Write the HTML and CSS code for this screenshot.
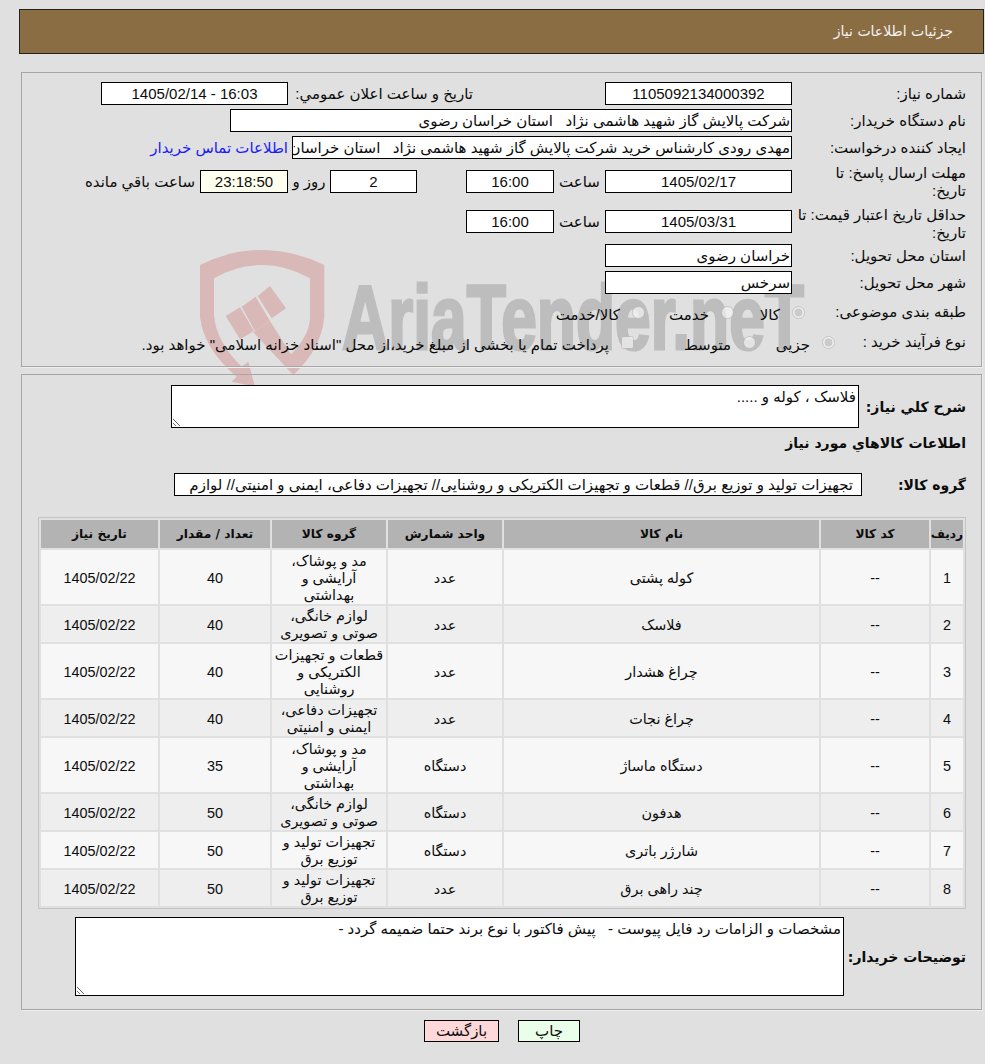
FILE: index.html
```html
<!DOCTYPE html>
<html lang="fa" dir="rtl">
<head>
<meta charset="utf-8">
<title>جزئیات اطلاعات نیاز</title>
<link rel="stylesheet" href="styles.css">
</head>
<body>
<svg class="watermark" width="985" height="420" viewBox="0 0 985 420" aria-hidden="true">
  <g class="wm-shield" transform="translate(190 245) scale(0.3333)">
    <path d="M30 60Q120 15 215 15Q310 15 403 60V215Q395 310 310 390L190 262L240 228L303 328Q360 270 360 215V100Q290 60 215 60Q140 60 72 100V210Q78 290 155 365L175 350L195 425L125 410L140 395Q40 310 30 215Z"/>
    <path d="M107 213L150 187L192 258L150 283Z"/>
    <path d="M155 185L197 155L240 228L195 258Z"/>
    <path d="M203 153L240 123L288 190L245 220Z"/>
  </g>
  <text class="wm-text" x="342" y="349" textLength="462" lengthAdjust="spacingAndGlyphs">AriaTender.neT</text>
</svg>
<header class="top-bar">جزئیات اطلاعات نیاز</header>

<section class="panel panel-info">
  <div class="row">
    <div class="label">شماره نیاز:</div>
    <div class="box box-main center">1105092134000392</div>
    <div class="pub-label">تاریخ و ساعت اعلان عمومي:</div>
    <div class="box box-main center">16:03 - 1405/02/14</div>
  </div>
  <div class="row">
    <div class="label">نام دستگاه خریدار:</div>
    <div class="box box-buyer">شرکت پالایش گاز شهید هاشمی نژاد   استان خراسان رضوی</div>
  </div>
  <div class="row row-creator">
    <div class="label">ایجاد کننده درخواست:</div>
    <div class="box box-creator">مهدی رودی کارشناس خرید شرکت پالایش گاز شهید هاشمی نژاد   استان خراسان رضوی</div>
    <a class="contact" href="#">اطلاعات تماس خریدار</a>
  </div>
  <div class="row row-date row-deadline">
    <div class="label label-wrap">مهلت ارسال پاسخ: تا تاریخ:</div>
    <div class="box box-main center">1405/02/17</div>
    <div class="word word-hour">ساعت</div>
    <div class="box box-time center">16:00</div>
    <div class="box box-days center">2</div>
    <div class="word word-days">روز و</div>
    <div class="box box-count center">23:18:50</div>
    <div class="word remain">ساعت باقي مانده</div>
  </div>
  <div class="row row-date row-validity">
    <div class="label label-wrap">حداقل تاریخ اعتبار قیمت: تا تاریخ:</div>
    <div class="box box-main center">1405/03/31</div>
    <div class="word word-hour">ساعت</div>
    <div class="box box-time center">16:00</div>
  </div>
  <div class="row">
    <div class="label">استان محل تحویل:</div>
    <div class="box box-main">خراسان رضوی</div>
  </div>
  <div class="row">
    <div class="label">شهر محل تحویل:</div>
    <div class="box box-main">سرخس</div>
  </div>
  <div class="row row-choice row-category">
    <div class="label">طبقه بندی موضوعی:</div>
    <label class="choice c-goods"><input type="radio" name="cat" checked disabled>کالا</label>
    <label class="choice c-service"><input type="radio" name="cat" disabled>خدمت</label>
    <label class="choice"><input type="radio" name="cat" disabled>کالا/خدمت</label>
  </div>
  <div class="row row-choice row-process">
    <div class="label">نوع فرآیند خرید :</div>
    <label class="choice c-minor"><input type="radio" name="proc" checked disabled>جزیی</label>
    <label class="choice c-medium"><input type="radio" name="proc" disabled>متوسط</label>
    <label class="choice"><input type="checkbox" disabled>پرداخت تمام یا بخشی از مبلغ خرید،از محل "اسناد خزانه اسلامی" خواهد بود.</label>
  </div>
</section>

<section class="panel panel-items">
  <div class="row row-desc">
    <div class="head-label">شرح کلي نیاز:</div>
    <textarea class="area area-desc" readonly>فلاسک ، کوله و .....</textarea>
  </div>
  <h2 class="section-title">اطلاعات کالاهاي مورد نیاز</h2>
  <div class="row row-group">
    <div class="head-label">گروه کالا:</div>
    <div class="box box-group"><span class="clip">تجهیزات تولید و توزیع برق// قطعات و تجهیزات الکتریکی و روشنایی// تجهیزات دفاعی، ایمنی و امنیتی// لوازم</span></div>
  </div>
  <table class="items">
    <colgroup>
      <col class="c1"><col class="c2"><col class="c3"><col class="c4"><col class="c5"><col class="c6"><col class="c7">
    </colgroup>
    <thead>
      <tr><th>ردیف</th><th>کد کالا</th><th>نام کالا</th><th>واحد شمارش</th><th>گروه کالا</th><th>تعداد / مقدار</th><th>تاریخ نیاز</th></tr>
    </thead>
    <tbody>
      <tr class="tall"><td>1</td><td>--</td><td>کوله پشتی</td><td>عدد</td><td>مد و پوشاک،<br>آرایشی و<br>بهداشتی</td><td>40</td><td>1405/02/22</td></tr>
      <tr><td>2</td><td>--</td><td>فلاسک</td><td>عدد</td><td>لوازم خانگی، صوتی و تصویری</td><td>40</td><td>1405/02/22</td></tr>
      <tr class="tall"><td>3</td><td>--</td><td>چراغ هشدار</td><td>عدد</td><td>قطعات و تجهیزات الکتریکی و روشنایی</td><td>40</td><td>1405/02/22</td></tr>
      <tr><td>4</td><td>--</td><td>چراغ نجات</td><td>عدد</td><td>تجهیزات دفاعی، ایمنی و امنیتی</td><td>40</td><td>1405/02/22</td></tr>
      <tr class="tall"><td>5</td><td>--</td><td>دستگاه ماساژ</td><td>دستگاه</td><td>مد و پوشاک،<br>آرایشی و<br>بهداشتی</td><td>35</td><td>1405/02/22</td></tr>
      <tr><td>6</td><td>--</td><td>هدفون</td><td>دستگاه</td><td>لوازم خانگی، صوتی و تصویری</td><td>50</td><td>1405/02/22</td></tr>
      <tr><td>7</td><td>--</td><td>شارژر باتری</td><td>دستگاه</td><td>تجهیزات تولید و توزیع برق</td><td>50</td><td>1405/02/22</td></tr>
      <tr><td>8</td><td>--</td><td>چند راهی برق</td><td>عدد</td><td>تجهیزات تولید و توزیع برق</td><td>50</td><td>1405/02/22</td></tr>
    </tbody>
  </table>
  <div class="row row-notes">
    <div class="head-label">توضیحات خریدار:</div>
    <textarea class="area area-notes" readonly>مشخصات و الزامات رد فایل پیوست -   پیش فاکتور با نوع برند حتما ضمیمه گردد -</textarea>
  </div>
</section>

<div class="actions">
  <button class="btn btn-print" type="button">چاپ</button>
  <button class="btn btn-back" type="button">بازگشت</button>
</div>
</body>
</html>
```

FILE: styles.css
```css
html, body { margin: 0; padding: 0; }
body {
  background: #e0e0e0;
  color: #0c0c0c;
  font-family: "Liberation Sans", "DejaVu Sans", sans-serif;
  font-size: 15px;
  line-height: 20px;
  height: 1064px;
  overflow: hidden;
  position: relative;
}
.watermark { position: absolute; left: 0; top: 0; z-index: 0; direction: ltr; }
.wm-shield { fill: #d9b8b8; }
.wm-text {
  font-family: "Liberation Sans", sans-serif;
  font-weight: 700;
  font-size: 90px;
  fill: #bdbdbd;
  stroke: #bdbdbd;
  stroke-width: 3px;
  direction: ltr;
  text-anchor: start;
}
.top-bar {
  position: relative;
  z-index: 1;
  box-sizing: border-box;
  height: 45px;
  margin: 9px 1px 0 19px;
  background: #8b6d43;
  border: 1px solid #222;
  color: #f2f2f2;
  padding: 11px 30px 0 0;
  font-family: "DejaVu Sans", sans-serif;
  font-size: 14px;
}
.panel {
  position: relative;
  z-index: 1;
  box-sizing: border-box;
  margin: 0 3px 0 21px;
  border: 1px solid #a6a6a6;
  box-shadow: 1px 1px 0 #eee;
  padding: 9px 15px 0 15px;
}
.panel-info { margin-top: 18px; height: 295px; }
.panel-items { margin-top: 7px; height: 636px; padding-top: 10px; }
.row { display: flex; align-items: center; margin-bottom: 4px; }
.label { box-sizing: border-box; width: 174px; flex: none; white-space: nowrap; }
.label-wrap { white-space: normal; line-height: 18px; }
.box {
  box-sizing: border-box;
  height: 23px;
  background: #fff;
  border: 1px solid #000;
  flex: none;
  overflow: hidden;
  white-space: pre;
  padding: 0 1px;
  line-height: 21px;
}
.center { text-align: center; }
.box-main { width: 187px; }
.box-buyer { width: 562px; }
.box-creator { width: 500px; }
.pub-label { width: 180px; margin: 0 132px 0 5px; white-space: nowrap; flex: none; }
.contact { margin-right: 4px; color: #1a1aff; text-decoration: none; white-space: nowrap; }
.row-creator { margin-bottom: 11px; }
.row-date { align-items: flex-start; }
.row-deadline { height: 36px; }
.row-deadline .label { margin-top: -6px; padding-left: 30px; }
.row-validity { height: 30px; }
.row-validity .label { margin-top: -4px; }
.word { flex: none; text-align: center; line-height: 24px; white-space: nowrap; }
.word-hour { width: 51px; }
.box-time { width: 88px; }
.box-days { width: 87px; margin-right: 49px; }
.word-days { width: 42px; }
.box-count { width: 88px; background: #fffff0; }
.remain { margin-right: 5px; }
.row-choice { height: 26px; }
.row-category { margin-top: 5px; }
.row-category .label { width: 161px; }
.row-process .label { width: 131px; }
.choice { display: flex; align-items: center; gap: 12px; white-space: nowrap; flex: none; padding-top: 6px; }
.choice input { margin: -6px 0 0; width: 13px; height: 13px; flex: none; }
.c-goods { width: 71px; }
.c-service { width: 89px; }
.c-minor { width: 79px; }
.c-medium { width: 122px; }
.head-label { width: 107px; flex: none; font-family: "DejaVu Sans", sans-serif; font-weight: 700; font-size: 14px; white-space: nowrap; }
.section-title { margin: 0; font-family: "DejaVu Sans", sans-serif; font-size: 14px; font-weight: 700; line-height: 20px; }
.area {
  box-sizing: border-box;
  background: #fff;
  border: 1px solid #000;
  border-radius: 0;
  margin: 0;
  padding: 1px 2px;
  font: inherit;
  color: inherit;
  flex: none;
  outline: none;
}
.row-desc { margin-bottom: 5px; }
.area-desc { width: 688px; height: 43px; }
.row-group { margin: 20px 0 21px; }
.box-group { width: 688px; margin-right: -3px; padding: 0 8px; }
.clip { display: block; overflow: hidden; }
.items {
  box-sizing: border-box;
  width: 928px;
  table-layout: fixed;
  border-collapse: separate;
  border-spacing: 2px;
  border: 1px solid #c4c4c4;
  margin: 0 0 8px 0;
}
.c1 { width: 32px; }
.c2 { width: 108px; }
.c3 { width: 315px; }
.c4 { width: 114px; }
.c5 { width: 114px; }
.c6 { width: 110px; }
.c7 { width: 117px; }
.items th {
  background: #b3b3b3;
  height: 28px;
  padding: 0;
  font-family: "DejaVu Sans", sans-serif;
  font-size: 12.2px;
  font-weight: 700;
}
.items td {
  padding: 2px 0 0;
  text-align: center;
  height: 34px;
  font-size: 14.4px;
  line-height: 17px;
}
.items tbody tr:nth-child(odd) td { background: #f7f7f7; }
.items tbody tr:nth-child(even) td { background: #eee; }
.items .tall td { height: 52px; }
.row-notes { margin: 0; }
.area-notes { width: 769px; height: 79px; margin-right: 15px; }
.actions { position: relative; z-index: 1; display: flex; justify-content: center; gap: 19px; margin-top: 10px; padding-left: 19px; }
.btn {
  box-sizing: border-box;
  height: 22px;
  border: 1px solid #000;
  border-radius: 0;
  padding: 0;
  font: inherit;
  color: #111;
  line-height: 18px;
}
.btn-print { width: 62px; background: #eaffea; }
.btn-back { width: 75px; background: #ffd9d9; }
```
